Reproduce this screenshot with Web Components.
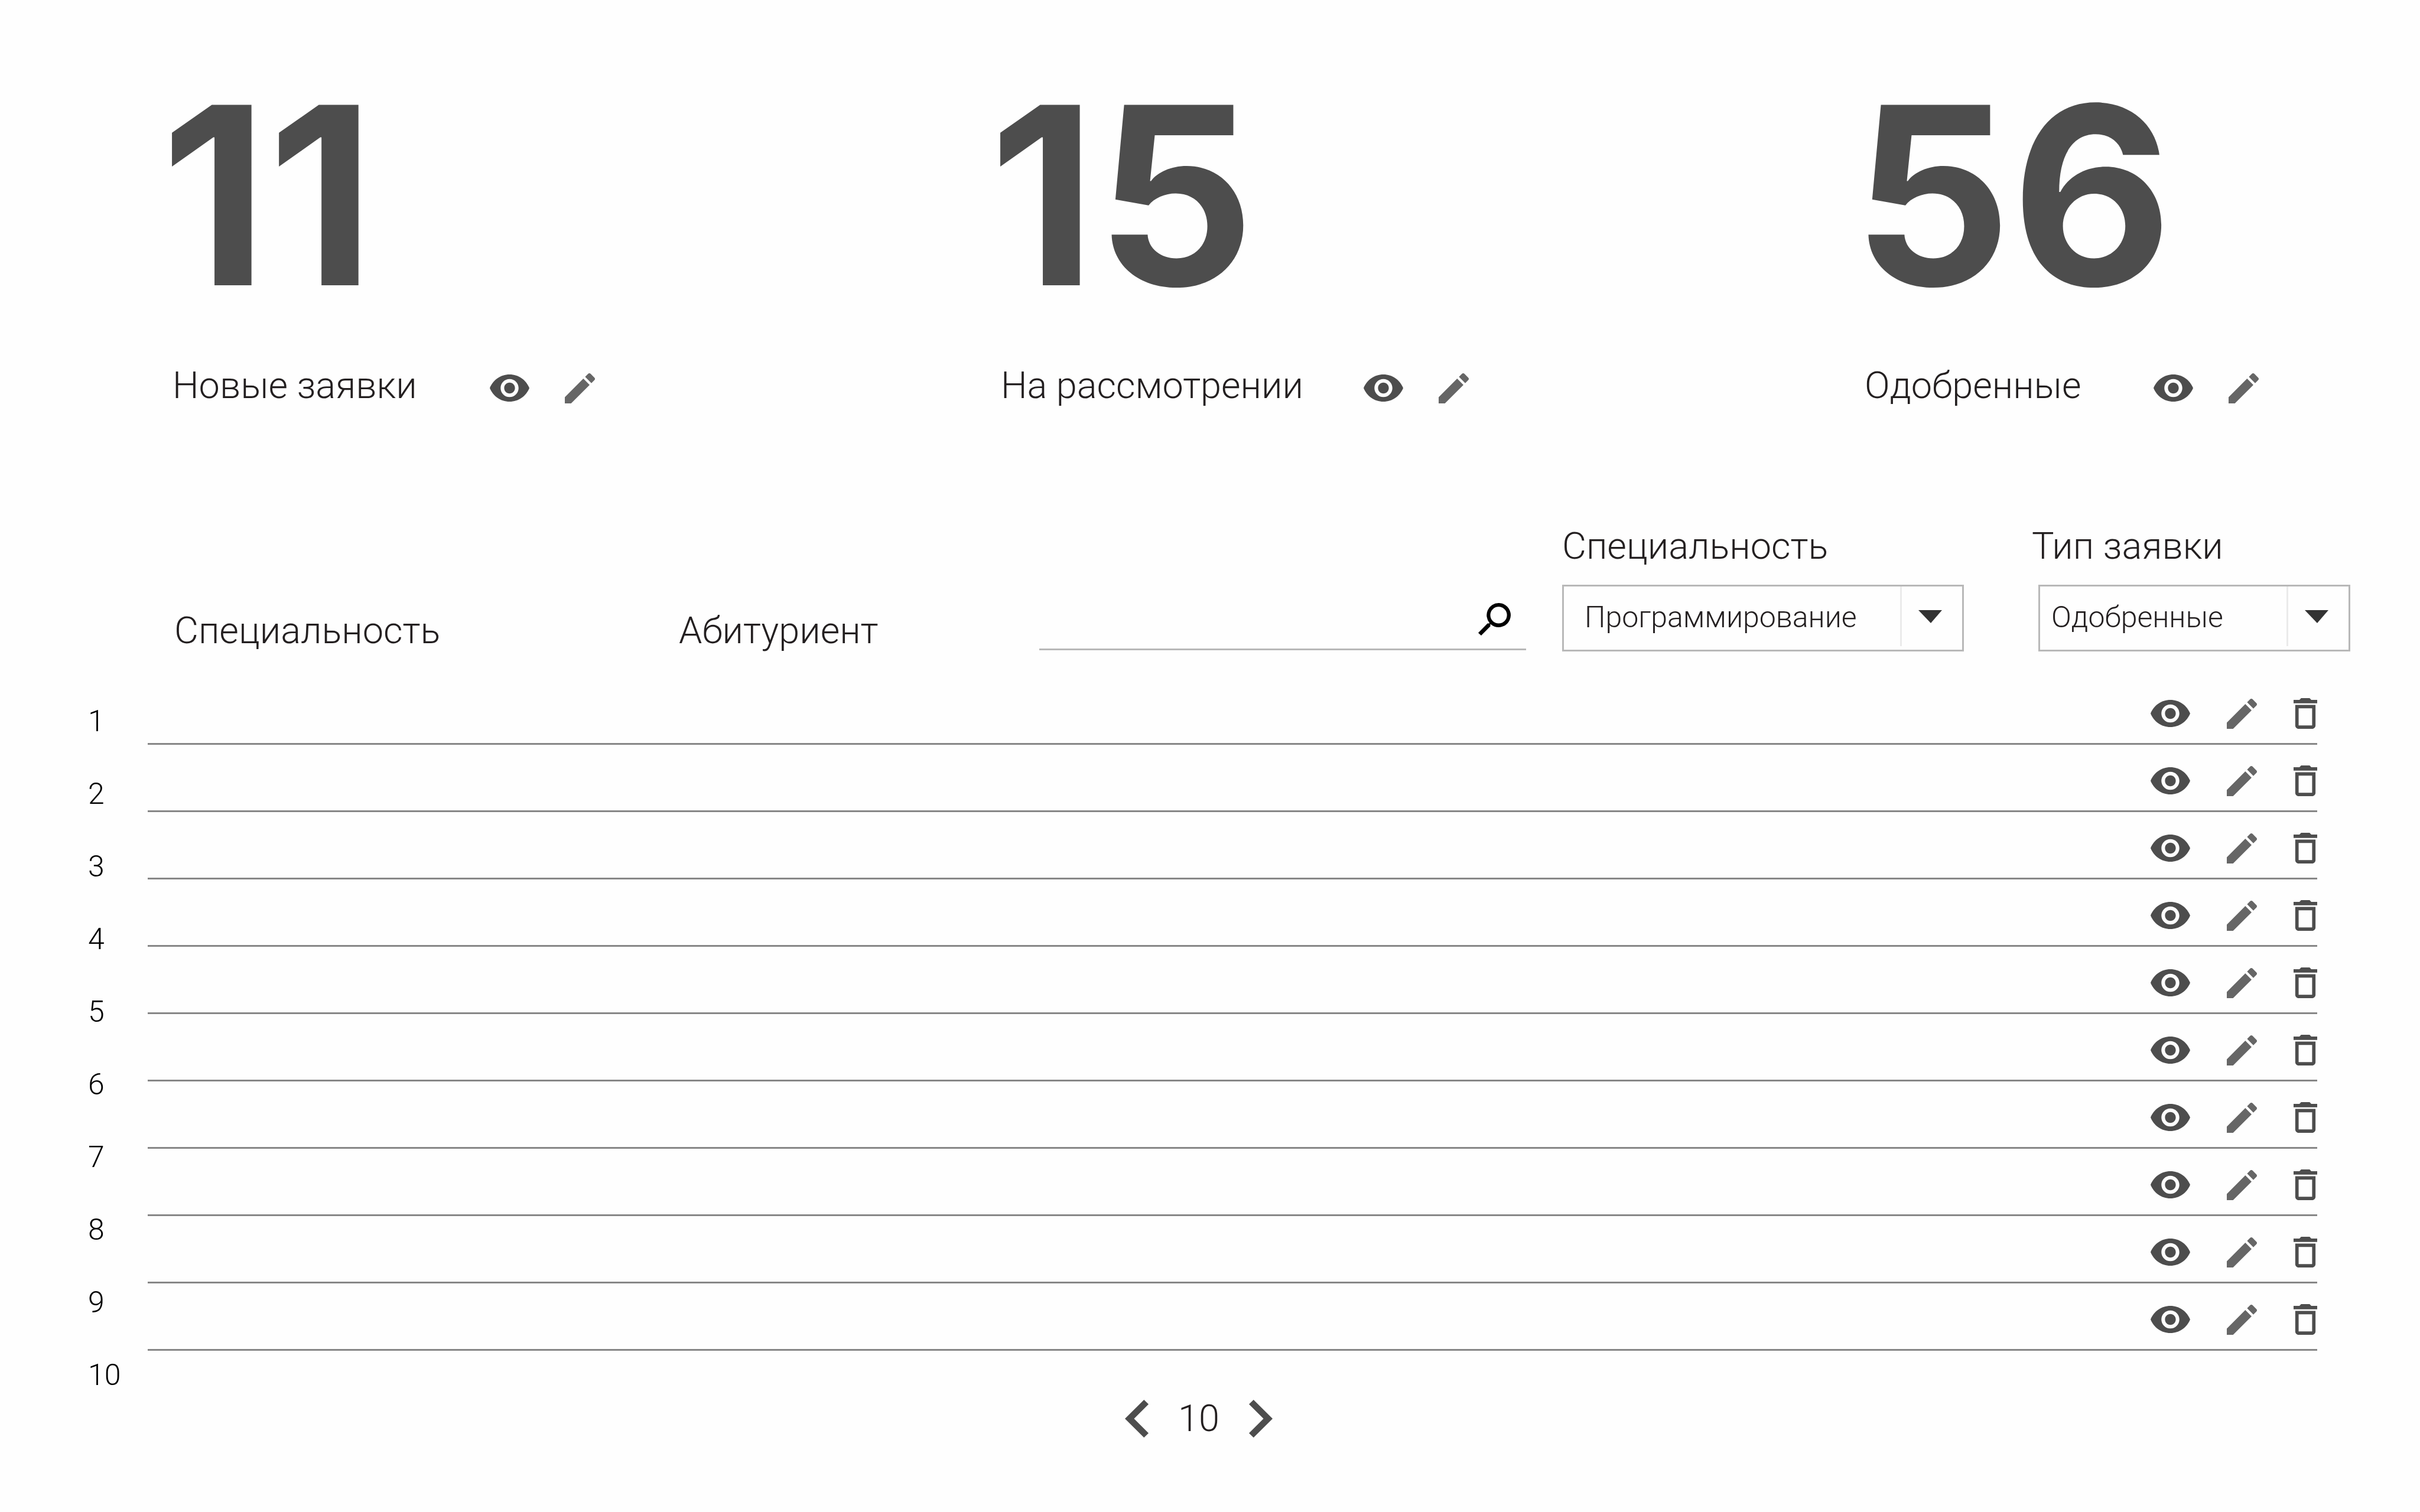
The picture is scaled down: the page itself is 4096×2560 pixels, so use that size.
<!DOCTYPE html>
<html lang="ru">
<head>
<meta charset="utf-8">
<meta name="viewport" content="width=device-width, initial-scale=1">
<title>Заявки</title>
<style>
  body { margin: 0; background: #fefefe; }
</style>
</head>
<body>
<admissions-page></admissions-page>

<template id="admissions-page">
  <style>
    :host {
      --ink: #231f20; --dark: #4d4d4d; --mid: #666; --line: #b8b8b8; --rule: #878787;
      --label: 63px; --small: 50px;
      display: block; padding-top: 120px;
      color: var(--ink); font: 300 var(--label)/70px Roboto, "Liberation Sans", sans-serif;
    }
    .stats { display: grid; grid-template-columns: 1402fr 1462fr 960fr; padding-left: 272px; }
    .filters {
      display: grid; grid-template-columns: 854fr 610fr 885fr 795fr 539fr; align-items: end;
      margin-top: 197px; padding: 0 118px 0 295px;
    }
    h2 { margin: 0; font: inherit; }
    search-field { margin: 0 61px 2px 0; }
    select-field.speciality { --inset: 35px; margin-right: 115px; }
    select-field.kind { --inset: 19px; --box-start: 11px; }
    .list { display: grid; grid-template-columns: 101px 1fr; margin-top: 44px; padding: 0 174px 0 149px; }
    page-nav { margin-top: 83px; padding-right: 114px; }
  </style>
  <header class="stats">
    <stat-card style="--label-width: 537px">11<span slot="label">Новые заявки</span></stat-card>
    <stat-card style="--label-width: 614px">15<span slot="label">На рассмотрении</span></stat-card>
    <stat-card style="--label-width: 489px">56<span slot="label">Одобренные</span></stat-card>
  </header>
  <section class="filters">
    <h2>Специальность</h2>
    <h2>Абитуриент</h2>
    <search-field></search-field>
    <select-field class="speciality" value="Программирование">Специальность</select-field>
    <select-field class="kind" value="Одобренные">Тип заявки</select-field>
  </section>
  <section class="list">
    <row-numbers count="10"></row-numbers>
    <div>
      <request-table rows="10"></request-table>
      <page-nav>10</page-nav>
    </div>
  </section>
</template>

<template id="icon-button">
  <style>
    :host { display: block; flex: none; }
    button { display: block; margin: 0; padding: 0; border: 0; background: none; color: inherit; cursor: pointer; }
    svg { display: block; fill: currentColor; }
  </style>
  <button type="button"></button>
</template>

<template id="stat-card">
  <style>
    :host { display: block; }
    .value { margin: 0; color: var(--dark); font: 700 420px/420px Inter, "Liberation Sans", sans-serif; }
    .caption { display: flex; align-items: center; height: 80px; margin-top: 73px; padding-left: 20px; white-space: nowrap; }
    .label { width: var(--label-width); }
    .actions { display: flex; align-items: center; gap: 60px; padding-top: 8px; }
  </style>
  <p class="value"><slot></slot></p>
  <div class="caption">
    <span class="label"><slot name="label"></slot></span>
    <div class="actions"><icon-button name="eye"></icon-button><icon-button name="pencil"></icon-button></div>
  </div>
</template>

<template id="search-field">
  <style>
    :host { display: block; }
    form { display: flex; align-items: center; height: 100px; padding-right: 26px; border-bottom: 3px solid var(--line); }
    input { flex: 1; min-width: 0; height: 70px; padding: 0; border: 0; outline: 0; background: none; color: inherit; font: inherit; font-size: var(--small); }
    icon-button { color: #000; }
  </style>
  <form><input type="search" aria-label="Поиск"><icon-button name="search"></icon-button></form>
</template>

<template id="select-field">
  <style>
    :host { display: block; }
    label { display: block; white-space: nowrap; }
    .box { display: grid; grid-template-columns: 1fr 105px; height: 107px; margin: 30px 0 0 var(--box-start, 0px); border: 3px solid var(--line); }
    select {
      grid-area: 1 / 1 / 2 / 3; appearance: none; min-width: 0; margin: 0; padding: 0 105px 4px var(--inset);
      border: 0; border-radius: 0; background: none; color: inherit; font: inherit; font-size: var(--small);
    }
    .arrow {
      grid-area: 1 / 2; display: flex; align-items: center; justify-content: center;
      margin-bottom: 6px; padding-right: 6px; border-left: 3px solid #ebebeb; pointer-events: none;
    }
    svg { display: block; fill: #333; }
  </style>
  <label for="choice"><slot></slot></label>
  <div class="box">
    <select id="choice"></select>
    <span class="arrow"><svg width="40" height="22" viewBox="0 0 40 22" aria-hidden="true"><path d="M0 0H40L21 22Z"/></svg></span>
  </div>
</template>

<template id="row-numbers">
  <style>
    :host { display: block; padding-top: 13px; color: #000; font-size: var(--small); line-height: 123px; }
    ol { margin: 0; padding: 0; list-style: none; }
  </style>
  <ol></ol>
</template>

<template id="request-table">
  <style>
    :host { display: block; }
    table { width: 100%; border-collapse: separate; border-spacing: 0; }
    td { box-sizing: border-box; height: 114px; padding: 11px 0 0 0; border-bottom: 3px solid var(--rule); vertical-align: middle; }
    .actions { display: flex; align-items: center; justify-content: flex-end; gap: 62px; }
  </style>
  <table aria-label="Заявки"><tbody></tbody></table>
</template>

<template id="page-nav">
  <style>
    :host { display: block; }
    nav { display: flex; align-items: center; justify-content: center; gap: 50px; height: 64px; }
  </style>
  <nav aria-label="Страницы"><icon-button name="prev"></icon-button><span><slot></slot></span><icon-button name="next"></icon-button></nav>
</template>

<script>
  const ICONS = {
    eye: { title: 'Просмотреть', w: 67, h: 46, box: '1 4.5 22 15', color: 'var(--dark)',
      d: 'M12 4.5C7 4.5 2.73 7.61 1 12c1.73 4.39 6 7.5 11 7.5s9.27-3.11 11-7.5c-1.73-4.39-6-7.5-11-7.5zM12 17c-2.76 0-5-2.24-5-5s2.24-5 5-5 5 2.24 5 5-2.24 5-5 5zm0-8c-1.66 0-3 1.34-3 3s1.34 3 3 3 3-1.34 3-3-1.34-3-3-3z' },
    pencil: { title: 'Изменить', w: 51, h: 51, box: '3 3 18 18', color: 'var(--mid)',
      d: 'M3 17.25V21h3.75L17.81 9.94l-3.75-3.75L3 17.25zM20.71 7.04c.39-.39.39-1.02 0-1.41l-2.34-2.34c-.39-.39-1.02-.39-1.41 0l-1.83 1.83 3.75 3.75 1.83-1.83z' },
    trash: { title: 'Удалить', w: 40, h: 52, box: '5 3 14 18', color: 'var(--dark)',
      d: 'M6 19c0 1.1.9 2 2 2h8c1.1 0 2-.9 2-2V7H6v12zM8 9h8v10H8V9zm7.5-5l-1-1h-5l-1 1H5v2h14V4h-3.5z' },
    search: { title: 'Найти', w: 55, h: 55, box: '193 148 242 242', color: '#000',
      d: 'M345 148a90 90 0 1 1 0 180 90 90 0 0 1-60-23l-2 2v15l-68 68-22-20 69-70h13l2-4A90 90 0 0 1 345 148zm0 28a62 62 0 1 0 0 124 62 62 0 0 0 0-124z' },
    prev: { title: 'Назад', w: 40, h: 64, box: '0 0 58 94', color: 'var(--dark)', d: 'M46.8 0 58 11 22.4 47 58 83 46.8 94 0 47Z' },
    next: { title: 'Вперёд', w: 40, h: 64, box: '0 0 58 94', color: 'var(--dark)', d: 'M11.2 0 0 11 35.6 47 0 83 11.2 94 58 47Z' }
  };

  class TemplateElement extends HTMLElement {
    connectedCallback() {
      if (this.shadowRoot) return;
      const root = this.attachShadow({ mode: 'open' });
      root.append(document.getElementById(this.localName).content.cloneNode(true));
      this.fill(root);
    }
    fill() {}
  }

  class IconButton extends TemplateElement {
    fill(root) {
      const icon = ICONS[this.getAttribute('name')];
      const button = root.querySelector('button');
      button.setAttribute('aria-label', icon.title);
      button.style.color = icon.color;
      button.innerHTML = `<svg width="${icon.w}" height="${icon.h}" viewBox="${icon.box}" fill-rule="evenodd" preserveAspectRatio="none" aria-hidden="true"><path d="${icon.d}"/></svg>`;
    }
  }

  class SelectField extends TemplateElement {
    fill(root) { root.querySelector('select').add(new Option(this.getAttribute('value'))); }
  }

  class RowNumbers extends TemplateElement {
    fill(root) {
      const list = root.querySelector('ol');
      for (let i = 1; i <= Number(this.getAttribute('count')); i++) {
        const item = document.createElement('li');
        item.textContent = i;
        list.append(item);
      }
    }
  }

  class RequestTable extends TemplateElement {
    fill(root) {
      const row = '<tr><td><div class="actions"><icon-button name="eye"></icon-button><icon-button name="pencil"></icon-button><icon-button name="trash"></icon-button></div></td></tr>';
      root.querySelector('tbody').innerHTML = row.repeat(Number(this.getAttribute('rows')));
    }
  }

  customElements.define('icon-button', IconButton);
  customElements.define('stat-card', class extends TemplateElement {});
  customElements.define('search-field', class extends TemplateElement {});
  customElements.define('select-field', SelectField);
  customElements.define('row-numbers', RowNumbers);
  customElements.define('request-table', RequestTable);
  customElements.define('page-nav', class extends TemplateElement {});
  customElements.define('admissions-page', class extends TemplateElement {});
</script>
</body>
</html>
